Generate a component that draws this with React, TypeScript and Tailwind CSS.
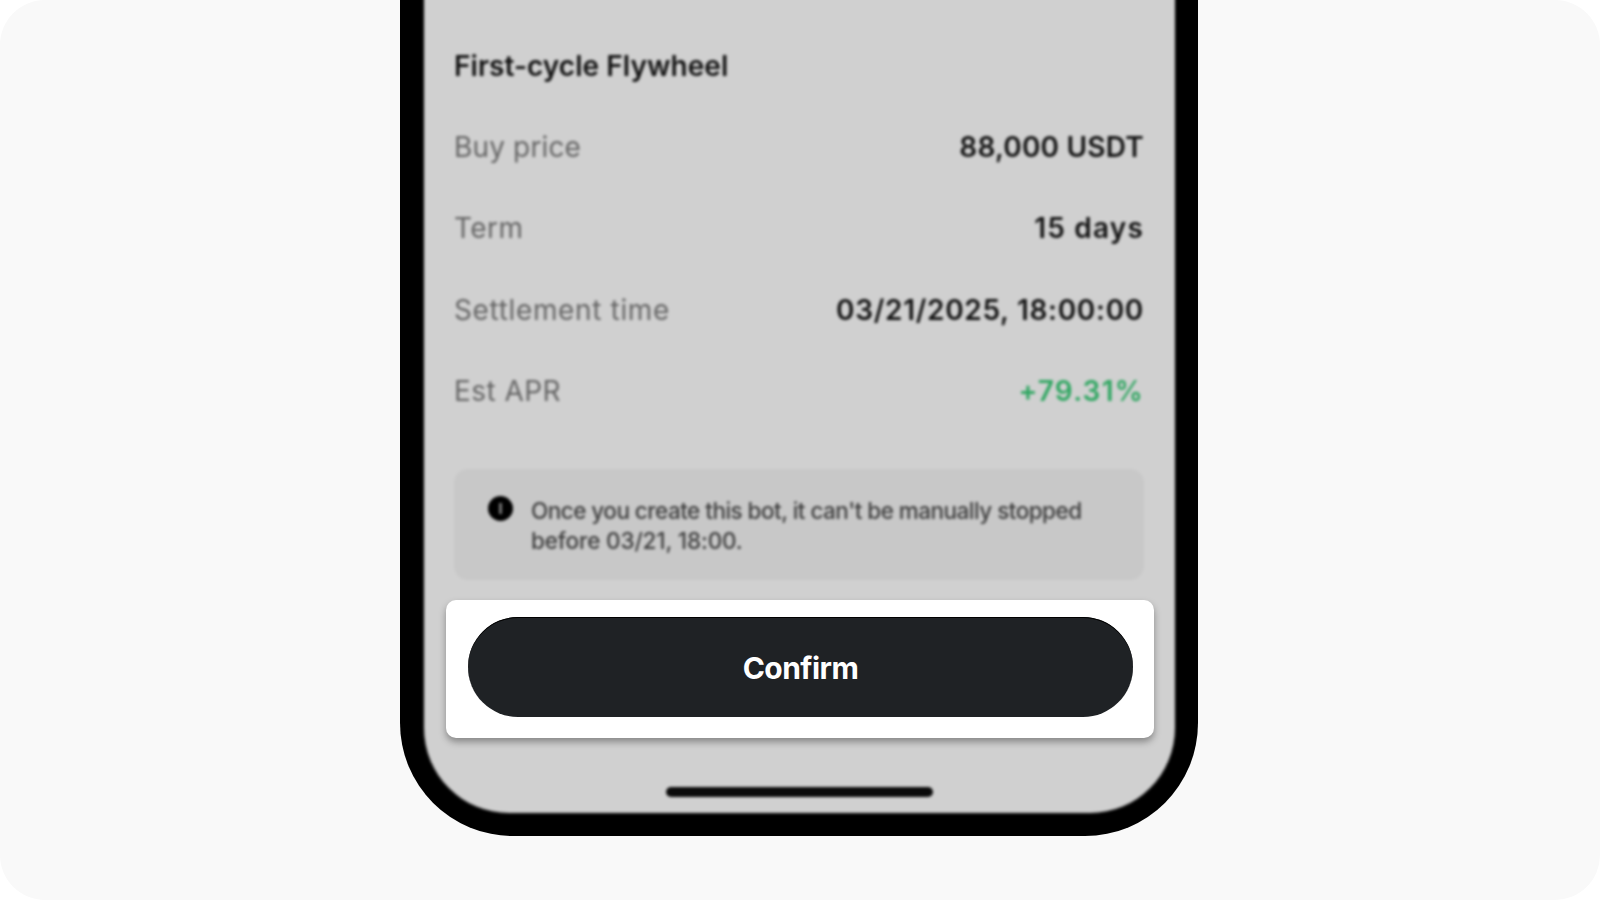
export default function App() {
  const rows: [string, string, string, string, string][] = [
    ["Buy price", "88,000 USDT", "text-[#111111]", "tracking-[0.15px]", "tracking-[0.2px]"],
    ["Term", "15 days", "text-[#111111]", "tracking-[0.45px]", "tracking-[1.2px]"],
    ["Settlement time", "03/21/2025, 18:00:00", "text-[#111111]", "tracking-[0.65px]", "tracking-[0.7px]"],
    ["Est APR", "+79.31%", "text-[#2fa661]", "tracking-[0.45px]", "tracking-[1.2px]"],
  ];
  return (
    <div className="w-[1600px] h-[900px] bg-white overflow-hidden font-['Inter',sans-serif]">
      <div className="w-full h-full bg-[#f9f9f9] rounded-[45px] flex justify-start items-start pl-[400px]">
        <div className="relative w-[798px] h-[836px] bg-black rounded-b-[113px] pl-[24px] pr-[23px] pb-[23px]">
          <div className="h-[calc(100%+8px)] -mt-[8px] bg-[#d0d0d0] rounded-b-[85px] blur-[1.4px] flex flex-col pl-[30px] pr-[31px] pt-[33px]">
            <div className="h-[81px] shrink-0 flex items-center text-[28px] font-semibold tracking-[0.05px] text-[#111111]">
              First-cycle Flywheel
            </div>
            {rows.map(([label, value, color, labelTrack, valueTrack]) => (
              <div key={label} className="h-[81.5px] shrink-0 flex items-center justify-between text-[28px]">
                <span className={`text-[#646464] ${labelTrack}`}>{label}</span>
                <span className={`font-semibold ${color} ${valueTrack}`}>{value}</span>
              </div>
            ))}
            <div className="mt-[36.6px] h-[111px] shrink-0 bg-[#c8c8c8] rounded-[14px] flex items-start pl-[34px] pt-[27px] gap-[18px]">
              <div className="w-[25px] h-[25px] rounded-full bg-black shrink-0 flex items-center justify-center">
                <div className="w-[3px] h-[11px] bg-[#777]" />
              </div>
              <div className="text-[22.5px] leading-[30px] font-medium text-[#3c3c3c]">
                <div className="tracking-[-0.53px]">Once you create this bot, it can't be manually stopped</div>
                <div className="tracking-[-0.15px]">before 03/21, 18:00.</div>
              </div>
            </div>
            <div className="mt-auto mb-[16px] w-[267px] h-[10px] rounded-full bg-[#0a0a0a] self-center" />
          </div>
          <div className="absolute left-[46px] top-[600px] w-[708px] h-[138px] bg-white rounded-[10px] shadow-[0_4px_7px_rgba(0,0,0,0.35)] flex items-start justify-center pt-[17px] pl-[1px]">
            <button className="w-[665px] h-[100px] pt-[2px] rounded-full bg-[#1f2225] text-white text-[30px] font-bold tracking-[-0.55px] shadow-[inset_0_1px_0_#000]">
              Confirm
            </button>
          </div>
        </div>
      </div>
    </div>
  );
}
